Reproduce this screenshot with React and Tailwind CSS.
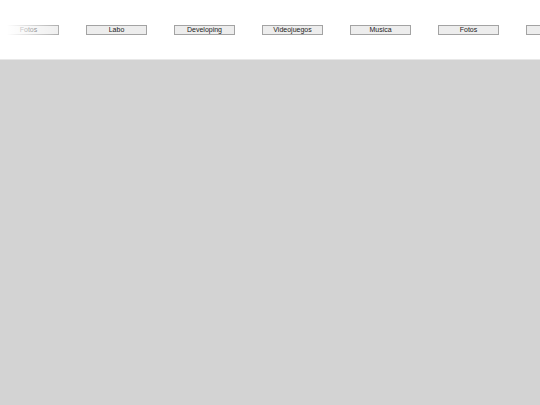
import React from "react";

const items = ["Fotos", "Labo", "Developing", "Videojuegos", "Musica", "Fotos", "Labo"];

export default function App() {
  return (
    <div className="w-[540px] h-[405px] flex flex-col bg-[#d3d3d3] overflow-hidden" style={{ fontFamily: '"Liberation Sans", Arial, sans-serif' }}>
      <div className="relative h-[60px] bg-white border-b border-[#e8e8e8] overflow-hidden shrink-0">
        <div className="flex gap-[27px] pt-[25px] ml-[-2px]">
          {items.map((t, i) => (
            <div
              key={i}
              className="shrink-0 w-[61px] h-[10px] border border-[#a3a3a3] bg-[#ededed] text-[7px] leading-[8px] text-[#222] text-center"
            >
              {t}
            </div>
          ))}
        </div>
        <div className="absolute left-0 top-0 h-full w-[66px] bg-gradient-to-r from-white from-10% to-transparent" />
      </div>
      <div className="flex-1" />
    </div>
  );
}
